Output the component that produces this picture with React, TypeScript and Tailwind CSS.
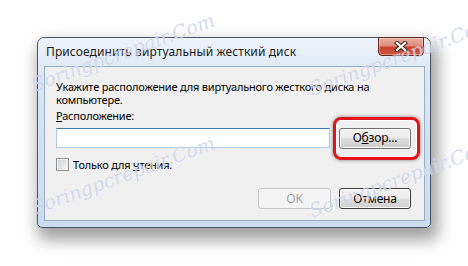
import React from "react";

const FONT = { fontFamily: '"Noto Sans", "Open Sans", sans-serif' };

function CloseGlyph() {
  return (
    <svg width="14" height="11" viewBox="0 0 14 11">
      <path d="M3 2 L11 9 M11 2 L3 9" stroke="#3b2a28" strokeWidth="4.2" strokeLinecap="square" fill="none" />
      <path d="M3 2 L11 9 M11 2 L3 9" stroke="#ffffff" strokeWidth="2.2" strokeLinecap="square" fill="none" />
    </svg>
  );
}

function WinButton({ children, disabled, dark }: { children: React.ReactNode; disabled?: boolean; dark?: boolean }) {
  if (disabled) {
    return (
      <div className="w-[73px] h-[21px] rounded-[3px] border border-[#c3c6c9] bg-[#f4f4f4] flex items-center justify-center text-[12px] text-[#a3a3a3]">
        {children}
      </div>
    );
  }
  return (
    <div
      className={`w-[72px] h-[21px] rounded-[3px] border ${dark ? "border-[#3d3d3d]" : "border-[#707070]"} flex items-center justify-center text-[12px] text-black shadow-[inset_0_0_0_1px_#fcfcfc] bg-[linear-gradient(#f3f3f3_0%,#ebebeb_50%,#dddddd_50%,#cfcfcf_100%)]`}
    >
      {children}
    </div>
  );
}

function Watermark({ x, y }: { x: number; y: number }) {
  return (
    <div
      className="absolute pointer-events-none whitespace-nowrap italic text-[19px] text-[#aab5da]/50 [text-shadow:0_0_1px_rgba(255,255,255,0.8)] -rotate-[20deg]"
      style={{ left: x, top: y, fontFamily: '"DejaVu Serif", "Liberation Serif", serif' }}
    >
      Soringpcrepair.Com
    </div>
  );
}

export default function App() {
  return (
    <div className="relative w-[468px] h-[266px] bg-white overflow-hidden" style={FONT}>
      <div className="ml-[37px] mt-[37px] w-[394px] h-[191px] border border-[#4a5667] rounded-t-[7px] rounded-b-[5px] flex flex-col bg-[linear-gradient(#eef3f9_0%,#dbe7f4_20%,#c9dcf0_100%)] shadow-[4px_9px_16px_3px_rgba(0,0,0,0.38)]">
        {/* title bar */}
        <div className="relative h-[28px] flex items-center pl-[8px] text-[12px] tracking-[0.1px] text-[#1a1a1a]">
          Присоединить виртуальный жесткий диск
          <div className="absolute right-[6px] -top-px w-[46px] h-[19px] rounded-b-[4px] border border-[#5f2a22] flex items-center justify-center bg-[linear-gradient(#eab1a4_0%,#de8b78_45%,#c9432c_55%,#d2563c_100%)] shadow-[inset_0_0_0_1px_rgba(255,255,255,0.35)]">
            <CloseGlyph />
          </div>
        </div>

        {/* client area */}
        <div className="ml-[6px] mr-[5px] h-[155px] border border-[#97adc6] bg-[#f0f0f0] pl-[11px] pr-[13px] pt-[13px] flex flex-col text-[11px] tracking-[-0.2px] text-black">
          <p className="leading-[13px]">
            Укажите расположение для виртуального жесткого диска на
            <br />
            компьютере.
          </p>
          <p className="leading-[13px] mt-[3px]">
            <span className="underline">Р</span>асположение:
          </p>
          <div className="mt-[5px] h-[22px] flex items-center gap-[9px]">
            <div className="flex-1 h-[20px] bg-white border border-[#aecbe6] border-t-[#3d7bad]" />
            <WinButton>
              О<span className="underline">б</span>зор...
            </WinButton>
          </div>
          <div className="mt-[9px] flex items-center gap-[4px]">
            <div className="w-[13px] h-[13px] border border-[#8e8f8f] bg-[linear-gradient(135deg,#cdd1d7,#f7f7f7)] shadow-[inset_0_0_0_1px_#f4f4f4]" />
            <span className="leading-[13px]">
              Только для <span className="underline">ч</span>тения.
            </span>
          </div>
          <div className="mt-[17px] flex justify-end gap-[8px]">
            <WinButton disabled>OK</WinButton>
            <WinButton dark>Отмена</WinButton>
          </div>
        </div>
      </div>

      {/* annotation highlight around browse button */}
      <div className="absolute left-[333px] top-[117px] w-[87px] h-[43px] rounded-[8px] border-[3px] border-[#e3121b] shadow-[0_0_3px_1px_rgba(0,0,0,0.3),inset_0_0_0_1px_rgba(255,255,255,0.9)]" />

      <Watermark x={26} y={38} />
      <Watermark x={304} y={42} />
      <Watermark x={26} y={161} />
      <Watermark x={304} y={164} />
    </div>
  );
}
